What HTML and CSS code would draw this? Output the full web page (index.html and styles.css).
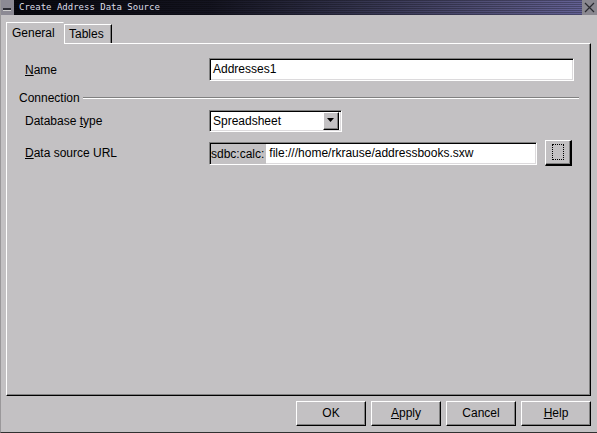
FILE: index.html
```html
<!DOCTYPE html>
<html>
<head>
<meta charset="utf-8">
<link rel="stylesheet" href="styles.css">
</head>
<body>
<div class="window">
  <div class="titlebar">
    <div class="menu-btn"><span class="dash"></span></div>
    <div class="title">Create Address Data Source</div>
    <div class="close-btn">
      <svg width="15" height="15" viewBox="0 0 15 15"><path d="M3 3 L12 12 M12 3 L3 12" stroke="#2a2a30" stroke-width="1.2" fill="none"/></svg>
    </div>
  </div>
  <div class="client">
    <div class="tabs">
      <div class="tab active">General</div>
      <div class="tab">Tables</div>
    </div>
    <div class="page">
      <div class="row row-name">
        <label class="lbl"><u>N</u>ame</label>
        <div class="field name-field">Addresses1</div>
      </div>
      <div class="group"><span class="group-title">Connection</span><span class="group-line"></span></div>
      <div class="row row-type">
        <label class="lbl">Database <u>t</u>ype</label>
        <div class="field select">
          <span class="select-text">Spreadsheet</span>
          <span class="select-arrow"><svg width="8" height="5" viewBox="0 0 8 5"><path d="M0 0 H7 L3.5 4 Z" fill="#000"/></svg></span>
        </div>
      </div>
      <div class="row row-url">
        <label class="lbl"><u>D</u>ata source URL</label>
        <div class="field url-field"><span class="prefix">sdbc:calc:</span><span class="url">file:///home/rkrause/addressbooks.sxw</span></div>
        <div class="browse"><span class="focus"></span></div>
      </div>
    </div>
    <div class="buttons">
      <div class="btn">OK</div>
      <div class="btn"><u>A</u>pply</div>
      <div class="btn">Cancel</div>
      <div class="btn"><u>H</u>elp</div>
    </div>
  </div>
</div>
</body>
</html>
```
FILE: styles.css
```css
html, body {
  margin: 0;
  padding: 0;
  background: #c3c1c3;
}
body {
  font-family: "Liberation Sans", Arial, sans-serif;
  font-size: 12px;
  color: #000;
}
.window {
  width: 597px;
  height: 433px;
  box-sizing: border-box;
  display: flex;
  flex-direction: column;
  background: #c3c1c3;
  border-bottom: 1px solid #303030;
  border-left: 1px solid #9a989a;
  overflow: hidden;
}
.titlebar {
  height: 15px;
  flex: 0 0 15px;
  display: flex;
  align-items: center;
  background:
    repeating-linear-gradient(to bottom, rgba(0,0,0,0.28) 0 1px, transparent 1px 2px),
    linear-gradient(to right, #08080e 0%, #141420 35%, #34344e 60%, #55537c 85%, #66649a 100%);
  margin-left: -1px;
}
.menu-btn {
  width: 14px;
  height: 15px;
  background: #8c8a94;
  position: relative;
  flex: 0 0 14px;
}
.menu-btn .dash {
  position: absolute;
  left: 3px;
  top: 8px;
  width: 8px;
  height: 2px;
  background: #2c2c34;
  box-shadow: 0 1px 0 #d0d0d0;
}
.title {
  flex: 1;
  padding-left: 5px;
  font-family: "DejaVu Sans Mono", monospace;
  font-size: 9px;
  color: #dcdce6;
  line-height: 15px;
}
.close-btn {
  width: 15px;
  height: 15px;
  background: #8a8890;
  flex: 0 0 15px;
}
.close-btn svg { display: block; }
.client {
  flex: 1;
  display: flex;
  flex-direction: column;
  padding: 7px 6px 0 5px;
}
.tabs {
  display: flex;
  align-items: flex-end;
  height: 21px;
  position: relative;
  z-index: 2;
}
.tab {
  box-sizing: border-box;
  height: 19px;
  border-top: 1px solid #fff;
  border-left: 1px solid #fff;
  border-right: 1px solid #000;
  box-shadow: inset -1px 0 0 #808080;
  padding: 0 6px 0 4px;
  line-height: 18px;
  width: 48px;
  background: #c3c1c3;
}
.tab.active {
  width: 58px;
  height: 22px;
  margin-bottom: -1px;
  padding-left: 5px;
  line-height: 20px;
  box-shadow: none;
  border-right: 1px solid #c3c1c3;
}
.page {
  box-sizing: border-box;
  height: 353px;
  flex: 0 0 353px;
  width: 585px;
  border-top: 1px solid #fff;
  border-left: 1px solid #fff;
  border-right: 1px solid #000;
  border-bottom: 1px solid #000;
  box-shadow: inset -1px -1px 0 #808080;
  padding: 14px 16px 0 18px;
  position: relative;
}
.row {
  display: grid;
  grid-template-columns: 184px auto;
  align-items: center;
}
.lbl { white-space: nowrap; }
.field {
  box-sizing: border-box;
  background: #fff;
  border-top: 1px solid #808080;
  border-left: 1px solid #808080;
  border-right: 1px solid #fff;
  border-bottom: 1px solid #fff;
  box-shadow: inset 1px 1px 0 #000, inset -1px -1px 0 #dcdadc;
  padding-left: 3px;
  white-space: nowrap;
  overflow: hidden;
}
.name-field {
  height: 23px;
  width: 365px;
  line-height: 21px;
}
.group {
  display: flex;
  align-items: center;
  height: 14px;
  margin: 10px -5px 0 -6px;
}
.group-title { padding-right: 3px; }
.group-line {
  flex: 1;
  height: 0;
  border-top: 1px solid #808080;
  border-bottom: 1px solid #fff;
}
.row-type { margin-top: 5px; }
.select {
  height: 22px;
  width: 133px;
  display: flex;
  align-items: center;
  justify-content: space-between;
  padding: 0 2px 0 3px;
}
.select-text { line-height: 20px; }
.select-arrow {
  box-sizing: border-box;
  width: 16px;
  height: 18px;
  background: #c3c1c3;
  border-top: 1px solid #fff;
  border-left: 1px solid #fff;
  border-right: 1px solid #000;
  border-bottom: 1px solid #000;
  box-shadow: inset -1px -1px 0 #808080;
  display: flex;
  align-items: center;
  justify-content: center;
}
.select-arrow svg { display: block; margin-top: -1px; }
.row-url {
  margin-top: 8px;
  grid-template-columns: 184px 328px 27px;
}
.url-field {
  height: 23px;
  padding-left: 1px;
  display: flex;
  align-items: center;
  line-height: 21px;
}
.prefix {
  background: #c3c1c3;
  padding-right: 2px;
  align-self: stretch;
  margin-top: 1px;
}
.url { padding-left: 3px; }
.browse {
  box-sizing: border-box;
  width: 27px;
  height: 26px;
  margin-left: 8px;
  background: #c3c1c3;
  border-top: 1px solid #fff;
  border-left: 1px solid #fff;
  border-right: 2px solid #000;
  border-bottom: 2px solid #000;
  box-shadow: inset -1px -1px 0 #808080;
  position: relative;
}
.browse .focus {
  position: absolute;
  left: 6px;
  top: 3px;
  width: 10px;
  height: 14px;
  border: 1px dotted #000;
}
.buttons {
  display: flex;
  justify-content: flex-end;
  gap: 5px;
  margin-top: 5px;
}
.btn {
  box-sizing: border-box;
  width: 70px;
  height: 25px;
  border-top: 1px solid #fff;
  border-left: 1px solid #fff;
  border-right: 1px solid #000;
  border-bottom: 1px solid #000;
  box-shadow: inset -1px -1px 0 #808080;
  text-align: center;
  line-height: 22px;
  background: #c3c1c3;
}
```
